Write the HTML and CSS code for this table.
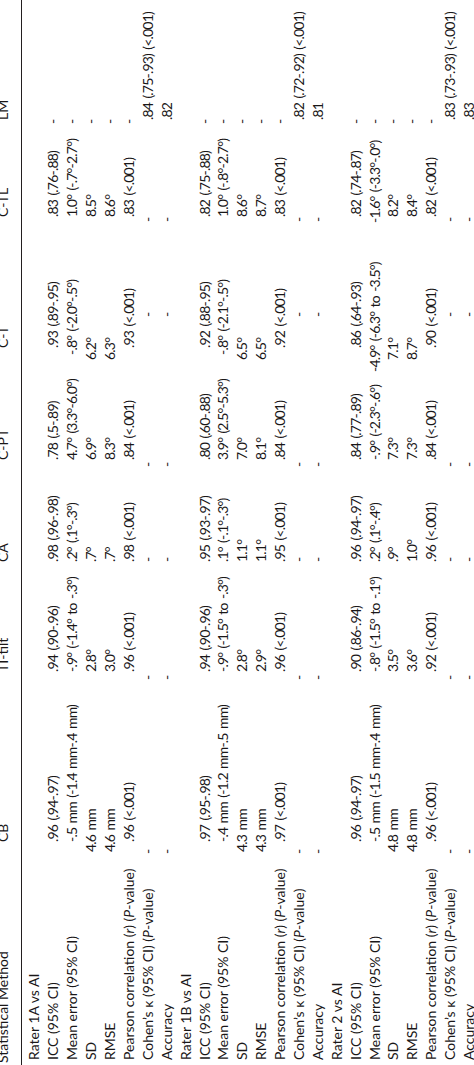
FILE: index.html
```html
<!DOCTYPE html>
<html>
<head>
<meta charset="utf-8">
<title>Table</title>
<link rel="stylesheet" href="styles.css">
</head>
<body>
<div class="page">
  <div class="rot">
    <div class="tbl">
      <div class="row head"><div>Statistical Method</div><div>CB</div><div>TI-tilt</div><div>CA</div><div>C-PT</div><div>C-T</div><div>C-TL</div><div>LM</div></div>
      <div class="body">
        <div class="row"><div>Rater 1A vs AI</div><div></div><div></div><div></div><div></div><div></div><div></div><div></div></div>
        <div class="row"><div>ICC (95% CI)</div><div>.96 (.94-.97)</div><div>.94 (.90-.96)</div><div>.98 (.96-.98)</div><div>.78 (.5-.89)</div><div>.93 (.89-.95)</div><div>.83 (.76-.88)</div><div class="na">-</div></div>
        <div class="row"><div>Mean error (95% CI)</div><div>-.5 mm (-1.4 mm-.4 mm)</div><div>-.9° (-1.4° to -.3°)</div><div>.2° (.1°-.3°)</div><div>4.7° (3.3°-6.0°)</div><div class="i7">-.8° (-2.0°-.5°)</div><div>1.0° (-.7°-2.7°)</div><div class="na">-</div></div>
        <div class="row"><div>SD</div><div class="i10">4.6 mm</div><div>2.8°</div><div>.7°</div><div>6.9°</div><div class="i12">6.2°</div><div>8.5°</div><div class="na">-</div></div>
        <div class="row"><div>RMSE</div><div class="i10">4.6 mm</div><div>3.0°</div><div>.7°</div><div>8.3°</div><div class="i12">6.3°</div><div>8.6°</div><div class="na">-</div></div>
        <div class="row"><div>Pearson correlation (<i>r</i>) (<i>P</i>-value)</div><div>.96 (&lt;.001)</div><div>.96 (&lt;.001)</div><div>.98 (&lt;.001)</div><div>.84 (&lt;.001)</div><div>.93 (&lt;.001)</div><div>.83 (&lt;.001)</div><div class="na">-</div></div>
        <div class="row"><div>Cohen’s κ (95% CI) (<i>P</i>-value)</div><div class="na">-</div><div class="na">-</div><div class="na">-</div><div class="na">-</div><div class="na">-</div><div class="na">-</div><div>.84 (.75-.93) (&lt;.001)</div></div>
        <div class="row"><div>Accuracy</div><div class="na">-</div><div class="na">-</div><div class="na">-</div><div class="na">-</div><div class="na">-</div><div class="na">-</div><div>.82</div></div>

        <div class="row"><div>Rater 1B vs AI</div><div></div><div></div><div></div><div></div><div></div><div></div><div></div></div>
        <div class="row"><div>ICC (95% CI)</div><div>.97 (.95-.98)</div><div>.94 (.90-.96)</div><div>.95 (.93-.97)</div><div>.80 (.60-.88)</div><div>.92 (.88-.95)</div><div>.82 (.75-.88)</div><div class="na">-</div></div>
        <div class="row"><div>Mean error (95% CI)</div><div>-.4 mm (-1.2 mm-.5 mm)</div><div>-.9° (-1.5° to -.3°)</div><div>.1° (-.1°-.3°)</div><div>3.9° (2.5°-5.3°)</div><div class="i7">-.8° (-2.1°-.5°)</div><div>1.0° (-.8°-2.7°)</div><div class="na">-</div></div>
        <div class="row"><div>SD</div><div class="i10">4.3 mm</div><div>2.8°</div><div>1.1°</div><div>7.0°</div><div class="i12">6.5°</div><div>8.6°</div><div class="na">-</div></div>
        <div class="row"><div>RMSE</div><div class="i10">4.3 mm</div><div>2.9°</div><div>1.1°</div><div>8.1°</div><div class="i12">6.5°</div><div>8.7°</div><div class="na">-</div></div>
        <div class="row"><div>Pearson correlation (<i>r</i>) (<i>P</i>-value)</div><div>.97 (&lt;.001)</div><div>.96 (&lt;.001)</div><div>.95 (&lt;.001)</div><div>.84 (&lt;.001)</div><div>.92 (&lt;.001)</div><div>.83 (&lt;.001)</div><div class="na">-</div></div>
        <div class="row"><div>Cohen’s κ (95% CI) (<i>P</i>-value)</div><div class="na">-</div><div class="na">-</div><div class="na">-</div><div class="na">-</div><div class="na">-</div><div class="na">-</div><div>.82 (.72-.92) (&lt;.001)</div></div>
        <div class="row"><div>Accuracy</div><div class="na">-</div><div class="na">-</div><div class="na">-</div><div class="na">-</div><div class="na">-</div><div class="na">-</div><div>.81</div></div>

        <div class="row"><div>Rater 2 vs AI</div><div></div><div></div><div></div><div></div><div></div><div></div><div></div></div>
        <div class="row"><div>ICC (95% CI)</div><div>.96 (.94-.97)</div><div>.90 (.86-.94)</div><div>.96 (.94-.97)</div><div>.84 (.77-.89)</div><div>.86 (.64-.93)</div><div>.82 (.74-.87)</div><div class="na">-</div></div>
        <div class="row"><div>Mean error (95% CI)</div><div>-.5 mm (-1.5 mm-.4 mm)</div><div>-.8° (-1.5° to -.1°)</div><div>.2° (.1°-.4°)</div><div>-.9° (-2.3°-.6°)</div><div class="i24">-4.9° (-6.3° to -3.5°)</div><div class="i6">-1.6° (-3.3°-.0°)</div><div class="na">-</div></div>
        <div class="row"><div>SD</div><div class="i10">4.8 mm</div><div>3.5°</div><div>.9°</div><div>7.3°</div><div class="i12">7.1°</div><div>8.2°</div><div class="na">-</div></div>
        <div class="row"><div>RMSE</div><div class="i10">4.8 mm</div><div>3.6°</div><div>1.0°</div><div>7.3°</div><div class="i12">8.7°</div><div>8.4°</div><div class="na">-</div></div>
        <div class="row"><div>Pearson correlation (<i>r</i>) (<i>P</i>-value)</div><div>.96 (&lt;.001)</div><div>.92 (&lt;.001)</div><div>.96 (&lt;.001)</div><div>.84 (&lt;.001)</div><div>.90 (&lt;.001)</div><div>.82 (&lt;.001)</div><div class="na">-</div></div>
        <div class="row"><div>Cohen’s κ (95% CI) (<i>P</i>-value)</div><div class="na">-</div><div class="na">-</div><div class="na">-</div><div class="na">-</div><div class="na">-</div><div class="na">-</div><div>.83 (.73-.93) (&lt;.001)</div></div>
        <div class="row"><div>Accuracy</div><div class="na">-</div><div class="na">-</div><div class="na">-</div><div class="na">-</div><div class="na">-</div><div class="na">-</div><div>.83</div></div>
      </div>
    </div>
  </div>
</div>
</body>
</html>
```

FILE: styles.css
```css
html, body {
  margin: 0;
  padding: 0;
  background: #ffffff;
  overflow: hidden;
}

.page {
  width: 474px;
  height: 1065px;
  overflow: hidden;
}

.rot {
  display: flow-root;
  width: 1065px;
  height: 474px;
  transform-origin: 0 0;
  transform: translateY(1065px) rotate(-90deg);
}

.tbl {
  margin-top: -6px;
  width: 1065px;
  font-family: Lato, "Noto Sans", "DejaVu Sans", sans-serif;
  font-size: 14px;
  color: #1a1718;
}

.row {
  display: grid;
  grid-template-columns: 223px 170px 110px 102px 112px 131px 97px 120px;
  height: 18.9px;
  line-height: 18.9px;
  white-space: nowrap;
}

.row > div {
  overflow: visible;
  letter-spacing: -0.8px;
  word-spacing: 1.5px;
}

.row > div:first-child {
  padding-left: 5px;
  letter-spacing: 0;
  word-spacing: 0;
}

.head {
  box-sizing: content-box;
  padding-bottom: 8px;
  border-bottom: 1px solid #231f20;
}

.head > div {
  letter-spacing: 0;
}

.head > div:first-child {
  padding-left: 2px;
}

.body {
  padding-top: 3.6px;
}

.i6 { text-indent: -6px; }
.i7 { text-indent: -7px; }
.i10 { text-indent: -10px; }
.i12 { text-indent: -12px; }
.i24 { text-indent: -24px; }

.row > .na:nth-child(2) { text-indent: -12px; }
.row > .na:nth-child(3) { text-indent: -8px; }
.row > .na:nth-child(4) { text-indent: 0; }
.row > .na:nth-child(5) { text-indent: -7px; }
.row > .na:nth-child(6) { text-indent: 31px; }
.row > .na:nth-child(7) { text-indent: -5px; }
.row > .na:nth-child(8) { text-indent: -4px; }
```
